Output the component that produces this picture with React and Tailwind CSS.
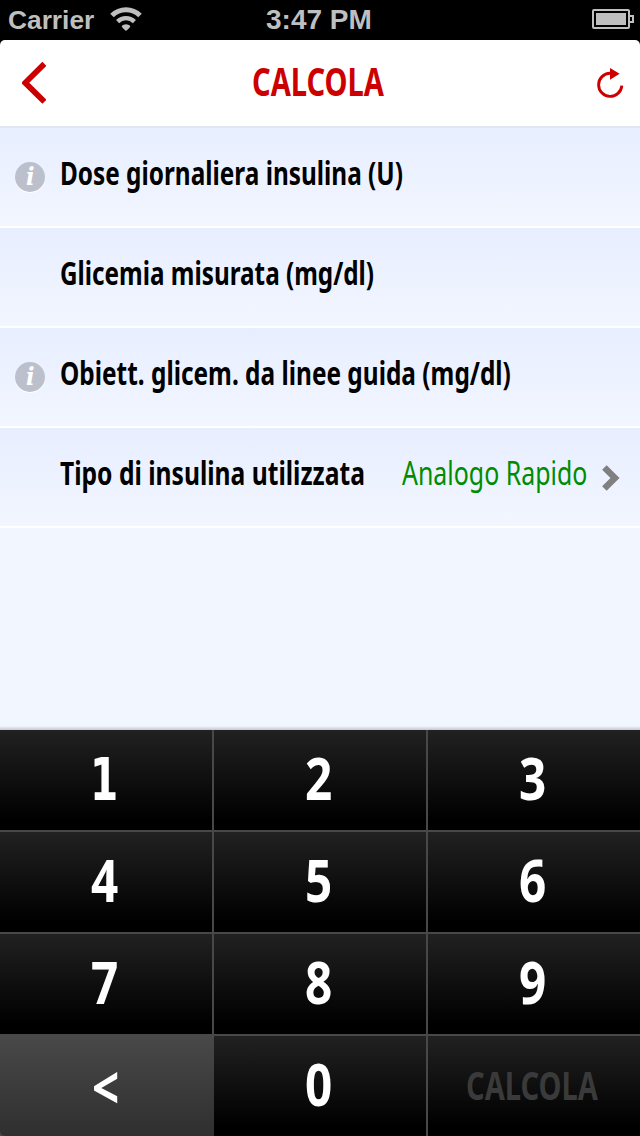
import React, { useLayoutEffect, useRef } from "react";
import clsx from "clsx";

const ROWS = [
  { label: "Dose giornaliera insulina (U)", width: 343, info: true },
  { label: "Glicemia misurata (mg/dl)", width: 314 },
  { label: "Obiett. glicem. da linee guida (mg/dl)", width: 451, info: true },
  { label: "Tipo di insulina utilizzata", width: 305, value: "Analogo Rapido" },
];

const KEYS = ["1", "2", "3", "4", "5", "6", "7", "8", "9", "<", "0", "CALCOLA"];

// Squeezes a line of text horizontally so it takes exactly `width` pixels.
const NarrowText = ({ width, className, children }) => {
  const ref = useRef(null);

  useLayoutEffect(() => {
    const el = ref.current;
    el.style.transform = `scaleX(${width / el.offsetWidth})`;
  }, [width, children]);

  return (
    <span className="block shrink-0" style={{ width }}>
      <span
        ref={ref}
        className={clsx("inline-block origin-left whitespace-nowrap align-top", className)}
      >
        {children}
      </span>
    </span>
  );
};

const StatusBar = () => (
  <div className="grid h-10 grid-cols-3 items-center bg-black px-2 font-['Liberation_Sans',sans-serif] font-bold text-[#bfbfbf]">
    <div className="flex items-center gap-4">
      <NarrowText width={86} className="text-[26px] leading-10">
        Carrier
      </NarrowText>
      <svg className="-mt-[2px] h-6 w-8" viewBox="0 0 32 24" fill="none" stroke="#bfbfbf">
        <path d="M2 8.6a19.8 19.8 0 0 1 28 0" strokeWidth="5" />
        <path d="M7.6 14.6a12 12 0 0 1 16.8 0" strokeWidth="4.4" />
        <path d="M11.6 19a6.2 6.2 0 0 1 8.8 0q-.4 2.4-4.4 5-4-2.600-4.400-5z" fill="#bfbfbf" stroke="none" />
      </svg>
    </div>
    <div className="flex justify-center pr-[2px]">
      <NarrowText width={106} className="text-[28px] leading-[38px]">
        3:47 PM
      </NarrowText>
    </div>
    <svg className="-mr-[2px] -mt-[2px] h-5 w-[42px] justify-self-end" viewBox="0 0 42 20" fill="none">
      <rect x="1" y="1" width="36" height="18" rx="1" stroke="#bfbfbf" strokeWidth="2" />
      <rect x="4" y="4" width="30" height="12" fill="#bfbfbf" />
      <path d="M38 7h3v6h-3" stroke="#bfbfbf" strokeWidth="2" />
    </svg>
  </div>
);

const Header = () => (
  <header className="flex h-22 items-center justify-between rounded-t-[5px] border-b-2 border-[#e2e5f2] bg-white pr-4 pl-[22px] text-[#cc0000]">
    <svg className="h-[42px] w-6" viewBox="0 0 24 42" fill="none" stroke="currentColor">
      <path d="M22.4 1.8 3.2 20.8l19.2 19" strokeWidth="5.8" />
    </svg>
    <div className="pr-[7px] pb-1">
      <NarrowText width={132} className="text-[39px] leading-10 font-bold">
        CALCOLA
      </NarrowText>
    </div>
    <svg className="h-8 w-7" viewBox="0 0 28 32" fill="none" stroke="currentColor">
      <path d="M14 6.2a11.6 11.6 0 1 0 11.8 12.4" strokeWidth="2.9" />
      <path d="M14 .9 23.6 6.7 14 12.8z" fill="currentColor" stroke="none" />
    </svg>
  </header>
);

const InfoIcon = () => (
  <span className="mt-[8px] flex size-[30px] items-center justify-center rounded-full bg-[#bcc0cc] font-['DejaVu_Serif',serif] text-[25px] leading-none font-bold text-white italic shadow-[0_1px_0_#ffffff]">
    <NarrowText width={9} className="leading-[30px]">
      i
    </NarrowText>
  </span>
);

const Row = ({ label, width, info, value }) => (
  <div className="flex h-25 items-center border-b-2 border-white bg-linear-to-b/srgb from-[#e7eeff] to-[#f2f6ff] pb-[8px] text-[33px] leading-10">
    <div className="flex w-15 shrink-0 pl-[15px]">{info && <InfoIcon />}</div>
    <NarrowText width={width} className="font-bold text-black">
      {label}
    </NarrowText>
    {value && (
      <div className="ml-auto flex items-center pr-[20px] text-[#008c00]">
        <NarrowText width={185}>{value}</NarrowText>
        <svg
          className="mt-[9px] ml-[15px] h-[26px] w-[18px]"
          viewBox="0 0 18 26"
          fill="none"
          stroke="#808080"
        >
          <path d="M2.4 2.4 13 13 2.4 23.6" strokeWidth="6.4" />
        </svg>
      </div>
    )}
  </div>
);

const Key = ({ value }) => {
  const isBack = value === "<";
  const isSubmit = value === "CALCOLA";

  return (
    <button
      type="button"
      className={clsx(
        "flex h-25 items-center justify-center bg-linear-to-b/srgb pr-1 leading-[80px] font-bold",
        isBack ? "from-[#494949] to-[#2f2f2f]" : "from-[#212121] to-black to-90%",
        isBack && "-mt-[2px] -mr-[2px] h-[102px] rounded-bl-[5px] pt-[2px]",
        isSubmit ? "pb-[2px] text-[39px] text-[#3a3a3a]" : "text-[60px] text-white",
        !isSubmit && !isBack && value !== "1" && "pb-[7px]"
      )}
    >
      {value === "1" ? (
        <NarrowText width={28} className="font-['DejaVu_Sans',sans-serif] text-[58px]">
          1
        </NarrowText>
      ) : (
        <NarrowText width={isSubmit ? 132 : 27}>{value}</NarrowText>
      )}
    </button>
  );
};

const App = () => (
  <div className="flex h-[1136px] w-[640px] flex-col overflow-hidden bg-black font-['Noto_Sans',sans-serif]">
    <StatusBar />
    <Header />
    <main className="flex flex-1 flex-col bg-[#f2f6ff]">
      {ROWS.map((row) => (
        <Row key={row.label} {...row} />
      ))}
      <div className="mt-auto h-1 bg-linear-to-b from-[#f2f6ff] to-[#c4c8d2]" />
    </main>
    <div className="grid grid-cols-[212px_212px_212px] gap-[2px] bg-[#484848]">
      {KEYS.map((key) => (
        <Key key={key} value={key} />
      ))}
    </div>
  </div>
);

export default App;
